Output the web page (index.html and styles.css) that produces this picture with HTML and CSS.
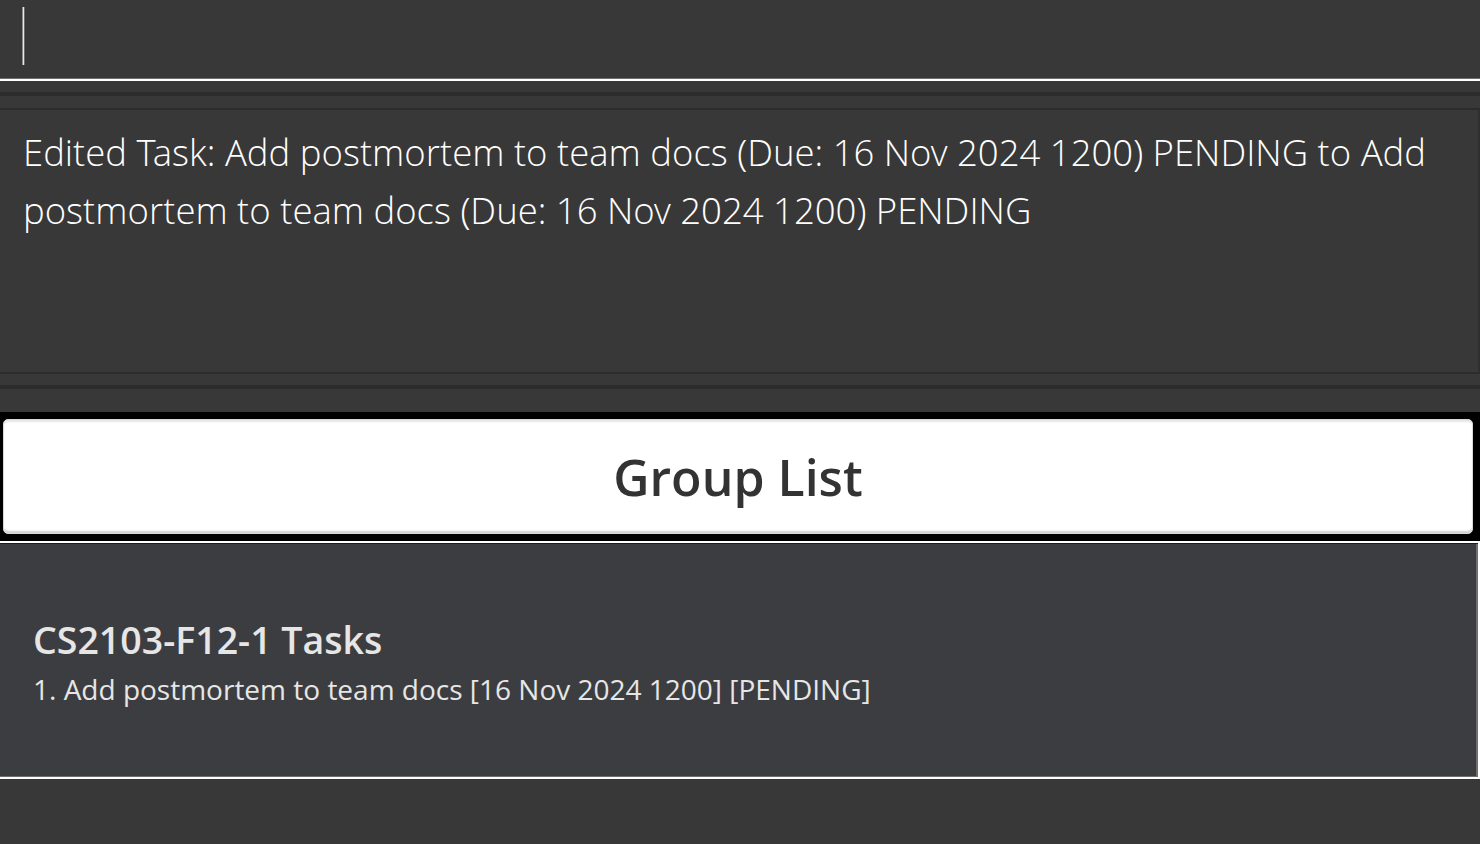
FILE: index.html
```html
<!DOCTYPE html>
<html lang="en">
<head>
<meta charset="utf-8">
<title>Task Manager</title>
<link rel="stylesheet" href="styles.css">
</head>
<body>
<div class="app">
  <div class="command-box">
    <span class="caret"></span>
  </div>
  <div class="result-pane">
    <div class="result-outer">
      <div class="result-inner">
        <p class="result-text">Edited Task: Add postmortem to team docs (Due: 16 Nov 2024 1200) PENDING to Add postmortem to team docs (Due: 16 Nov 2024 1200) PENDING</p>
      </div>
    </div>
  </div>
  <div class="group-header">
    <div class="group-button">Group List</div>
  </div>
  <div class="group-list">
    <div class="group-card">
      <div class="group-title">CS2103-F12-1 Tasks</div>
      <div class="group-task">1. Add postmortem to team docs [16 Nov 2024 1200] [PENDING]</div>
    </div>
  </div>
  <div class="footer-space"></div>
</div>
</body>
</html>
```
FILE: styles.css
```css
html, body {
  margin: 0;
  padding: 0;
  background: #383838;
  height: 100%;
}
.app {
  width: 1480px;
  height: 844px;
  display: flex;
  flex-direction: column;
  font-family: "Open Sans", "Noto Sans", sans-serif;
  overflow: hidden;
}
.command-box {
  height: 81px;
  box-sizing: border-box;
  background: #383838;
  border-bottom: 2px solid #ffffff;
  box-shadow: inset 0 -1px 0 #6e6e6e;
  padding: 7px 0 0 22px;
  flex: none;
}
.caret {
  display: block;
  width: 1px;
  height: 58px;
  background: #e8e8e8;
  border-left: 1px solid #8a8a8a;
  border-right: 1px solid #6a6a6a;
}
.result-pane {
  flex: none;
  background: #383838;
  padding: 11px 0 23px;
}
.result-outer {
  border-top: 4px solid #2c2c2c;
  border-bottom: 4px solid #2c2c2c;
  padding: 12px 0 11px;
}
.result-inner {
  height: 262px;
  box-sizing: content-box;
  border-top: 2px solid #2c2c2c;
  border-bottom: 2px solid #2c2c2c;
  border-right: 2px solid #2f2f2f;
  background: #383838;
}
.result-text {
  margin: 0;
  padding: 13px 40px 0 23px;
  color: #ffffff;
  font-family: "Open Sans Light", "Open Sans", sans-serif;
  font-weight: 300;
  font-size: 36.5px;
  line-height: 58px;
}
.group-header {
  flex: none;
  background: #000000;
  padding: 7px 7px 7px 3px;
}
.group-button {
  height: 115px;
  box-sizing: border-box;
  background: #ffffff;
  border-radius: 5px;
  border: 1px solid #d8d8d8;
  box-shadow: inset 0 -3px 2px -1px #d0d0d0, inset 0 3px 2px -1px #e6e6e6;
  display: flex;
  align-items: center;
  justify-content: center;
  color: #333333;
  font-size: 50px;
  font-weight: 600;
}
.group-list {
  flex: none;
  height: 234px;
  box-sizing: content-box;
  background: #3c3d40;
  border-top: 2px solid #ffffff;
  border-right: 2px solid #ffffff;
  border-bottom: 2px solid #ffffff;
  box-shadow: inset 0 1px 0 #1e1e1e, inset -2px 0 0 #6e6e6e, inset 0 -1px 0 #6e6e6e;
}
.group-card {
  padding: 75px 0 0 33px;
  color: #e6e6e6;
}
.group-title {
  font-size: 37.5px;
  font-weight: 600;
  line-height: 44px;
}
.group-task {
  font-size: 28px;
  line-height: 36px;
  margin-top: 9px;
}
.footer-space {
  flex: 1;
  background: #383838;
}
```
